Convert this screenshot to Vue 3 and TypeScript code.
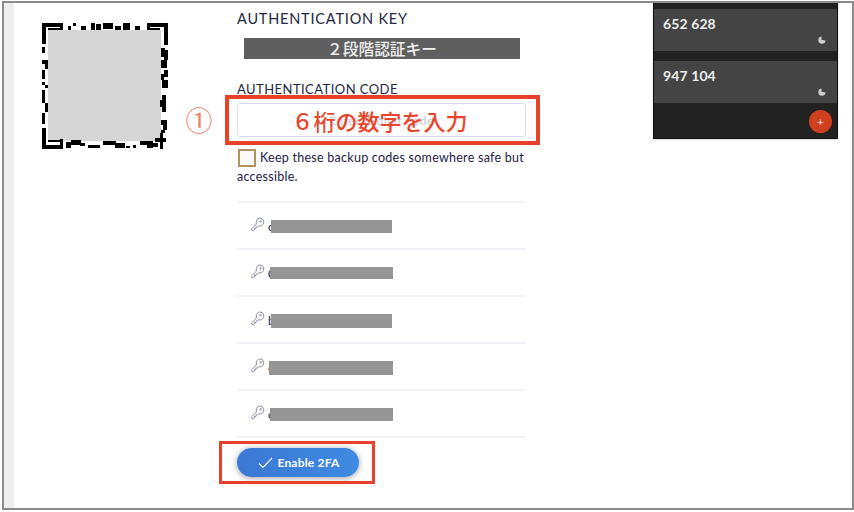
<script setup lang="ts">
const qrRects: number[][] = [
  // top-left finder
  [0,0,21,4],[0,0,4,21],[18,0,3,7],[6,5,15,2],
  // top-right finder
  [105,0,21,4],[122,0,4,22],[105,0,3,7],[105,5,13,2],
  // bottom-left finder
  [0,105,4,21],[0,122,21,4],[18,116,3,10],[6,117,12,2],
  // top strip
  [26,3,3,4],[31,0,3,3],[39,3,5,4],[49,0,4,7],[54,1,5,6],[61,0,10,6],[73,3,6,4],[81,0,7,7],[93,3,5,4],
  // left strip
  [0,24,3,6],[0,37,6,4],[3,37,3,9],[0,47,3,9],[0,59,3,3],[3,62,3,3],[0,67,3,13],[3,80,3,9],[0,90,3,11],
  // right strip
  [119,25,4,9],[122,27,4,10],[119,37,6,8],[122,47,4,7],[119,51,3,6],[120,57,6,8],[120,72,4,17],[118,77,3,7],[119,97,6,5],[121,102,4,5],[119,107,4,3],
  // bottom strip
  [24,119,5,6],[29,117,10,5],[38,120,5,3],[46,122,12,3],[61,118,13,4],[73,120,10,5],[84,123,4,2],[91,122,3,3],[98,118,13,4],[105,118,6,7],[109,120,7,4],[118,110,3,16],[113,115,11,4],
]
const rows = [
  { x: 0, w: 121, h: 13, mark: 'c' },
  { x: -1, w: 123, h: 12, mark: '0' },
  { x: 0, w: 121, h: 14, mark: 'b' },
  { x: -2, w: 124, h: 14, mark: 'c' },
  { x: -1, w: 123, h: 13, mark: 'c' },
]
const otps = ['652 628', '947 104']
</script>

<template>
  <div class="frame">
    <div class="strip"></div>
    <div class="qr-col">
      <svg class="qr" width="126" height="127" viewBox="0 0 126 127">
        <rect x="6" y="7" width="113" height="111" fill="#d6d6d6" />
        <rect v-for="(r, i) in qrRects" :key="i" :x="r[0]" :y="r[1]" :width="r[2]" :height="r[3]" fill="#000" />
      </svg>
    </div>
    <div class="main">
      <h3 class="title">AUTHENTICATION KEY</h3>
      <div class="keybar">２段階認証キー</div>
      <label class="label">AUTHENTICATION CODE</label>
      <div class="input-wrap">
        <div class="input">
          <span class="placeholder">Enter 6-digit code</span>
          <span class="overlay">６桁の数字を入力</span>
        </div>
        <span class="circled">①</span>
        <div class="anno anno-input"></div>
      </div>
      <div class="keep">
        <span class="check"></span>Keep these backup codes somewhere safe but accessible.
      </div>
      <ul class="codes">
        <li v-for="(r, i) in rows" :key="i" class="code">
          <svg class="key" width="14" height="15" viewBox="0 0 14 15" fill="none" stroke="#8b8fa8" stroke-width="1">
            <path d="M8.800 1a4 4 0 0 1 1.800 7.600c-1 .4-2 .4-2.900.1L6.500 10H5v1.500H3.500V13l-1.200.8-1.500-.3-.3-1.600L5.400 7.200C4.700 4 6.300 1 8.800 1z" />
            <circle cx="9.600" cy="4.300" r=".8" />
          </svg>
          <span class="mark">{{ r.mark }}</span>
          <span class="bar" :style="{ left: 34 + r.x + 'px', width: r.w + 'px', height: r.h + 'px' }"></span>
        </li>
      </ul>
      <div class="btn-wrap">
        <button class="btn">
          <svg width="15" height="12" viewBox="0 0 15 12" fill="none" stroke="#fff" stroke-width="1.100"><path d="M1 6.500 5 10.500 14 1" /></svg>
          <span>Enable 2FA</span>
        </button>
        <div class="anno anno-btn"></div>
      </div>
    </div>
    <div class="phone">
      <div class="phone-top"></div>
      <div v-for="o in otps" :key="o" class="otp">
        <span class="otp-num">{{ o }}</span>
        <svg class="pie" width="8" height="8" viewBox="0 0 8 8"><path d="M3.500 0.500A3.600 3.600 0 1 0 7.500 4.500L3.500 3.800Z" fill="#cfcfcf" /></svg>
      </div>
      <div class="fab">+</div>
    </div>
  </div>
</template>

<style>
html, body { margin: 0; background: #fff; }
</style>

<style scoped>
.frame {
  position: relative;
  box-sizing: border-box;
  width: 852px;
  height: 509px;
  margin: 1px 0 0 2px;
  border: 2px solid #8c8c8c;
  display: flex;
  background: #fff;
  font-family: Lato, "Noto Sans", "Noto Sans CJK JP", sans-serif;
  overflow: hidden;
}
.strip { width: 10px; background: #eeeeee; flex: none; }
.qr-col { width: 126px; margin-left: 28px; padding-top: 20px; flex: none; }
.qr { display: block; }
.main { width: 289px; margin-left: 69px; padding-top: 6px; flex: none; color: #1d2147; }
.title {
  margin: 0;
  font-size: 14.500px;
  font-weight: 400;
  line-height: 20px;
  letter-spacing: .8px;
  color: #23263f;
}
.keybar {
  margin: 9px 0 0 7px;
  width: 276px;
  height: 21px;
  background: #5f5f5f;
  color: #f0f0f0;
  font-family: "Noto Sans CJK JP", sans-serif;
  font-size: 15.700px;
  font-weight: 500;
  line-height: 21px;
  text-align: center;
}
.label {
  display: block;
  margin-top: 21px;
  font-size: 13px;
  line-height: 18px;
  letter-spacing: .45px;
  color: #23263f;
}
.input-wrap { position: relative; margin-top: 5px; }
.input {
  position: relative;
  box-sizing: border-box;
  height: 34px;
  border: 1px solid #d9dcee;
  border-radius: 3px;
  display: flex;
  align-items: center;
  justify-content: center;
}
.placeholder { font-size: 12px; color: #c4c8dc; letter-spacing: .6px; }
.overlay {
  position: absolute;
  left: 0;
  right: 4px;
  top: 0;
  bottom: 0;
  display: flex;
  align-items: center;
  justify-content: center;
  font-family: "Noto Sans CJK JP", sans-serif;
  font-size: 22px;
  font-weight: 500;
  color: #e8452a;
}
.circled {
  position: absolute;
  left: -54px;
  top: 0;
  width: 32px;
  text-align: center;
  font-family: "Noto Sans CJK JP", sans-serif;
  font-size: 27px;
  line-height: 34px;
  color: #f0805f;
}
.anno { position: absolute; box-sizing: border-box; border: 3px solid #e8402a; pointer-events: none; }
.anno-input { left: -12px; top: -8px; width: 315px; height: 50px; border-width: 4px; }
.keep { margin-top: 11px; font-size: 12.500px; line-height: 19px; letter-spacing: .26px; color: #1d2147; }
.check {
  float: left;
  box-sizing: border-box;
  width: 18px;
  height: 18px;
  margin: 1px 4px 0 1px;
  border: 2px solid #b5935a;
  background: #fafafa;
}
.codes { list-style: none; margin: 15px 0 0; padding: 0; border-bottom: 2px solid #f1f2f6; }
.code { position: relative; box-sizing: border-box; height: 47px; border-top: 2px solid #f1f2f6; }
.key { position: absolute; left: 14px; top: 14px; }
.mark { position: absolute; left: 31px; top: 16px; font-size: 12px; line-height: 16px; color: #1d2147; }
.bar { position: absolute; top: 17px; background: #959595; }
.btn-wrap { position: relative; margin-top: 10px; width: 122px; }
.btn {
  display: flex;
  align-items: center;
  justify-content: center;
  gap: 4px;
  width: 122px;
  height: 29px;
  padding: 0 0 0 2px;
  border: none;
  border-radius: 15px;
  background: linear-gradient(90deg, #3a78d4, #3f8ae2);
  box-shadow: 0 1px 6px rgba(40, 40, 60, .45);
  color: #fff;
  font-family: Lato, "Noto Sans", sans-serif;
  font-size: 12px;
  font-weight: 700;
  letter-spacing: .2px;
}
.anno-btn { left: -18px; top: -7px; width: 156px; height: 43px; }
.phone {
  position: absolute;
  left: 649px;
  top: -3px;
  box-sizing: border-box;
  width: 185px;
  height: 139px;
  background: #222;
  border-right: 1px solid #111;
  border-bottom: 1px solid #111;
  border-left: 1px solid #111;
  box-shadow: 0 1px 2px rgba(0,0,0,.15);
  color: #eee;
}
.phone-top { height: 3px; background: #0d0d0d; margin-bottom: 6px; }
.otp { position: relative; height: 42px; margin-bottom: 10px; background: #444; }
.otp-num { position: absolute; left: 9px; top: 6px; font-size: 14px; line-height: 18px; font-weight: 700; letter-spacing: .1px; }
.pie { position: absolute; left: 164px; top: 27px; }
.fab {
  position: absolute;
  left: 155px;
  top: 110px;
  width: 23px;
  height: 23px;
  border-radius: 50%;
  background: #d13f1e;
  color: #f5d8d0;
  font-size: 11px;
  line-height: 23px;
  text-align: center;
}
</style>
